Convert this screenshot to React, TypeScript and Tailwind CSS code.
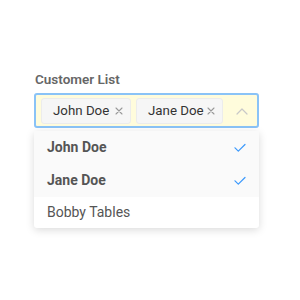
import React from "react";

const Check = () => (
  <svg width="12" height="10" viewBox="0 0 12 10" fill="none">
    <path d="M1 4.8 L4.3 8.2 L11 1.5" stroke="#3b99fc" strokeWidth="1.2" strokeLinecap="round" strokeLinejoin="round" />
  </svg>
);

const X = () => (
  <svg width="8" height="8" viewBox="0 0 8 8" fill="none" className="shrink-0">
    <path d="M1 1 L7 7 M7 1 L1 7" stroke="#999" strokeWidth="1.1" strokeLinecap="round" />
  </svg>
);

const Chip = ({ label, w }: { label: string; w: string }) => (
  <div className={`flex shrink-0 items-center justify-between whitespace-nowrap h-[26px] pl-[11px] pr-[7px] bg-[#f6f6f6] border border-[#ececec] rounded-[3px] text-[13.3px] text-[#333] ${w}`}>
    <span>{label}</span>
    <X />
  </div>
);

export default function App() {
  return (
    <div className="w-[300px] h-[300px] bg-white pt-[71px] pl-[34px]" style={{ fontFamily: "Roboto, 'Liberation Sans', sans-serif" }}>
      <div className="w-[225px]">
        <div className="text-[13.5px] font-semibold text-[#666] mb-[6px] leading-[16px] pl-[1px]">Customer List</div>
        <div className="flex items-center h-[35px] border-2 border-[#8ac3f7] rounded-[3px] bg-[#fffcdc] pl-[5px] pr-[9px] gap-[5px]">
          <Chip label="John Doe" w="w-[90px]" />
          <Chip label="Jane Doe" w="w-[87px]" />
          <div className="flex-1" />
          <svg width="12" height="8" viewBox="0 0 12 8" fill="none" className="shrink-0">
            <path d="M1 7 L6 2 L11 7" stroke="#c8c8c8" strokeWidth="1.2" strokeLinecap="round" strokeLinejoin="round" />
          </svg>
        </div>
        <div className="mt-[3px] bg-white rounded-[3px] shadow-[0_2px_8px_rgba(0,0,0,0.15)] text-[14px] text-[#555]">
          <div className="flex items-center justify-between h-[33px] pl-[13px] pr-[13px] bg-[#fafafa] font-bold">
            <span>John Doe</span>
            <Check />
          </div>
          <div className="flex items-center justify-between h-[33px] pl-[13px] pr-[13px] bg-[#fafafa] font-bold">
            <span>Jane Doe</span>
            <Check />
          </div>
          <div className="flex items-center h-[31px] pl-[13px] pr-[13px]">
            <span>Bobby Tables</span>
          </div>
        </div>
      </div>
    </div>
  );
}
